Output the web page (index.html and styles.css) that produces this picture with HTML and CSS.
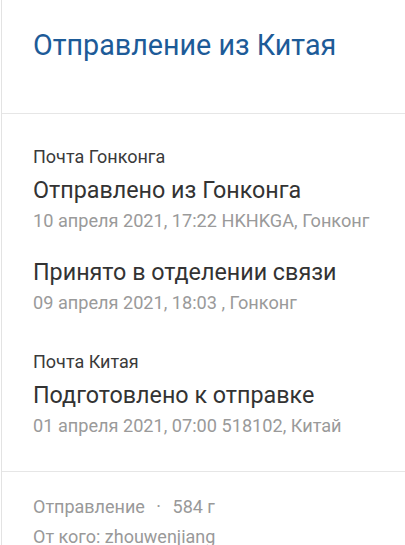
FILE: index.html
```html
<!DOCTYPE html>
<html lang="ru">
<head>
<meta charset="utf-8">
<link rel="stylesheet" href="styles.css">
</head>
<body>
<div class="panel">
  <header class="head">
    <h1 class="title">Отправление из Китая</h1>
  </header>
  <section class="history">
    <div class="group">
      <div class="carrier">Почта Гонконга</div>
      <div class="event">
        <div class="event-name">Отправлено из Гонконга</div>
        <div class="event-meta">10 апреля 2021, 17:22 HKHKGA, Гонконг</div>
      </div>
      <div class="event">
        <div class="event-name">Принято в отделении связи</div>
        <div class="event-meta">09 апреля 2021, 18:03 , Гонконг</div>
      </div>
    </div>
    <div class="group">
      <div class="carrier">Почта Китая</div>
      <div class="event">
        <div class="event-name">Подготовлено к отправке</div>
        <div class="event-meta">01 апреля 2021, 07:00 518102, Китай</div>
      </div>
    </div>
  </section>
  <section class="info">
    <div class="info-row">Отправление <span class="dot">·</span> 584 г</div>
    <div class="info-row">От кого: zhouwenjiang</div>
  </section>
</div>
</body>
</html>
```
FILE: styles.css
```css
html, body {
  margin: 0;
  padding: 0;
  background: #fff;
}
body {
  font-family: Roboto, "Noto Sans", sans-serif;
  color: #333;
}
.panel {
  margin-left: 1px;
  border-left: 1px solid #e3e3e3;
  height: 545px;
  overflow: hidden;
}
.head {
  padding: 28px 0 51px 31px;
  border-bottom: 1px solid #e6e6e6;
}
.title {
  margin: 0;
  font-weight: 400;
  font-size: 28.7px;
  line-height: 34px;
  color: #1d5b98;
}
.history {
  padding: 31px 0 33px 31px;
  border-bottom: 1px solid #e6e6e6;
  display: flex;
  flex-direction: column;
  gap: 35px;
}
.group {
  display: flex;
  flex-direction: column;
  gap: 24px;
}
.carrier {
  font-size: 18px;
  line-height: 24px;
  color: #3a3a3a;
  margin-bottom: -18px;
}
.event-name {
  font-size: 23.3px;
  line-height: 30px;
  color: #333;
  margin-bottom: 4px;
}
.event-meta {
  font-size: 18.15px;
  line-height: 24px;
  color: #9a9a9a;
}
.info {
  padding: 20px 0 0 31px;
}
.info-row {
  font-size: 18px;
  line-height: 30px;
  color: #999;
}
.dot {
  margin: 0 7px;
}
```
